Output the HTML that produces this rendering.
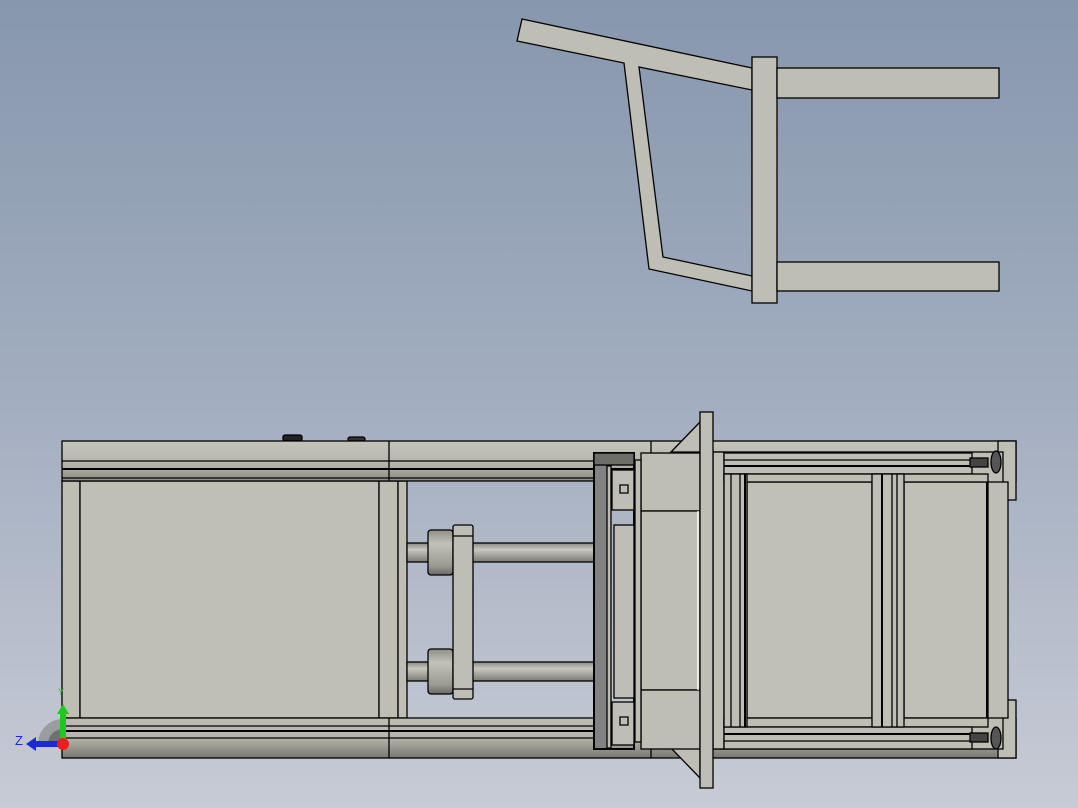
<!DOCTYPE html>
<html><head><meta charset="utf-8"><style>
html,body{margin:0;padding:0;width:1078px;height:808px;overflow:hidden}
body{background:linear-gradient(#8797ad,#a3aec0 50%,#c7cbd5)}
svg{position:absolute;left:0;top:0}
</style></head><body>
<svg width="1078" height="808" viewBox="0 0 1078 808" xmlns="http://www.w3.org/2000/svg">
<defs>
<linearGradient id="rail" x1="0" y1="0" x2="0" y2="1">
<stop offset="0" stop-color="#c4c4ba"/><stop offset="0.6" stop-color="#b4b4aa"/><stop offset="1" stop-color="#8a8a82"/></linearGradient>
<linearGradient id="railb" x1="0" y1="0" x2="0" y2="1">
<stop offset="0" stop-color="#bdbdb3"/><stop offset="0.5" stop-color="#b5b5ab"/><stop offset="1" stop-color="#77776f"/></linearGradient>
<linearGradient id="rod" x1="0" y1="0" x2="0" y2="1">
<stop offset="0" stop-color="#8a8a84"/><stop offset="0.35" stop-color="#c8c8c0"/><stop offset="1" stop-color="#7a7a74"/></linearGradient>
<linearGradient id="boss" x1="0" y1="0" x2="0" y2="1">
<stop offset="0" stop-color="#8e8e86"/><stop offset="0.3" stop-color="#c2c2b8"/><stop offset="0.8" stop-color="#9a9a92"/><stop offset="1" stop-color="#6a6a64"/></linearGradient>
</defs>
<g stroke="#000" stroke-width="1.3" fill="#bebeb4">
<!-- chair -->
<path fill-rule="evenodd" d="M522,19 L752,68 L752,291 L649,269 L624,63 L517,41 Z M639,67 L752,90 L752,276 L663,257 Z"/>
<rect x="752" y="57" width="25" height="246"/>
<rect x="777" y="68" width="222" height="30"/>
<rect x="777" y="262" width="222" height="29"/>

<!-- left panel -->
<rect x="62" y="481" width="18" height="237"/>
<rect x="80" y="481" width="299" height="237" fill="#bfbfb6"/>
<rect x="379" y="481" width="19" height="237"/>
<rect x="398" y="481" width="9" height="237"/>
<!-- rods -->
<rect x="407" y="543" width="188" height="19" fill="url(#rod)"/>
<rect x="407" y="662" width="188" height="19" fill="url(#rod)"/>
<rect x="428" y="530" width="25" height="45" rx="3" fill="url(#boss)"/>
<rect x="428" y="649" width="25" height="45" rx="3" fill="url(#boss)"/>
<rect x="453" y="525" width="20" height="174" rx="2"/>
<line x1="453" y1="536" x2="473" y2="536"/><line x1="453" y1="689" x2="473" y2="689"/>

<!-- top rail -->
<rect x="283" y="435" width="19" height="6" fill="#222" rx="2"/>
<rect x="348" y="437" width="17" height="4" fill="#333" rx="2"/>
<rect x="62" y="441" width="954" height="40" fill="url(#rail)"/>
<line x1="62" y1="461" x2="1000" y2="461"/>
<line x1="62" y1="469" x2="1000" y2="469" stroke-width="2"/>
<line x1="62" y1="478" x2="1000" y2="478"/>
<line x1="389" y1="441" x2="389" y2="481"/>
<line x1="651" y1="441" x2="651" y2="453"/>
<!-- bottom rail -->
<rect x="62" y="718" width="954" height="40" fill="url(#railb)"/>
<line x1="62" y1="726" x2="1000" y2="726"/>
<line x1="62" y1="731" x2="1000" y2="731" stroke-width="2"/>
<line x1="62" y1="738" x2="1000" y2="738"/>
<line x1="389" y1="718" x2="389" y2="758"/>
<line x1="651" y1="749" x2="651" y2="758"/>

<!-- right end caps -->
<rect x="998" y="441" width="18" height="59"/>
<rect x="998" y="700" width="18" height="58"/>

<!-- right frame -->
<rect x="713" y="452" width="290" height="297"/>
<rect x="747" y="482" width="125" height="236" fill="#c0c0b7"/>
<rect x="904" y="482" width="84" height="236" fill="#c0c0b7"/>
<rect x="713" y="452" width="11" height="297"/>
<rect x="724" y="453" width="248" height="21"/>
<line x1="724" y1="460" x2="972" y2="460"/><line x1="724" y1="466" x2="972" y2="466" stroke-width="2"/>
<rect x="724" y="474" width="264" height="8"/>
<rect x="724" y="718" width="264" height="9"/>
<rect x="724" y="727" width="248" height="22"/>
<line x1="724" y1="734" x2="972" y2="734" stroke-width="2"/><line x1="724" y1="741" x2="972" y2="741"/>
<rect x="724" y="474" width="23" height="253"/>
<line x1="731" y1="474" x2="731" y2="727"/><line x1="740" y1="474" x2="740" y2="727"/><line x1="745" y1="474" x2="745" y2="727" stroke-width="2"/>
<rect x="872" y="474" width="32" height="253"/>
<line x1="882" y1="474" x2="882" y2="727" stroke-width="2"/><line x1="892" y1="474" x2="892" y2="727"/><line x1="897" y1="474" x2="897" y2="727"/>
<rect x="988" y="482" width="20" height="236"/>
<line x1="987" y1="482" x2="987" y2="718" stroke-width="2"/>
<!-- screws/feet -->
<rect x="970" y="458" width="18" height="9" fill="#444"/>
<rect x="970" y="733" width="18" height="9" fill="#444"/>
<ellipse cx="996" cy="462" rx="5" ry="11" fill="#555"/>
<ellipse cx="996" cy="738" rx="5" ry="11" fill="#555"/>

<!-- flange triangles -->
<path d="M700,422 L671,452 L700,452 Z"/>
<path d="M700,778 L671,748 L700,748 Z"/>
<!-- carriage blocks -->
<rect x="641" y="453" width="59" height="58"/>
<rect x="641" y="511" width="59" height="179"/>
<rect x="641" y="690" width="59" height="59"/>
<line x1="698" y1="511" x2="698" y2="690" stroke="#fff"/>
<rect x="635" y="460" width="6" height="282"/>
<rect x="700" y="412" width="13" height="376"/>
<!-- guide frame -->
<rect x="594" y="453" width="40" height="296" fill="none" stroke-width="2"/>
<rect x="595" y="454" width="12" height="294" fill="#828282" stroke="none"/>
<rect x="607" y="466" width="4" height="282" fill="#bcbcb2"/>
<rect x="594" y="453" width="40" height="12" fill="#6e6e68"/>
<rect x="614" y="525" width="20" height="173"/>
<rect x="612" y="470" width="22" height="40"/>
<rect x="612" y="702" width="22" height="43"/>
<path d="M620,485 h8 v8 h-8 z M620,717 h8 v8 h-8 z" fill="none"/>
</g>

<!-- axis triad -->
<path d="M38,744 A25,25 0 0 1 63,719 L63,744 Z" fill="#9a9ca0"/>
<path d="M48,744 A15,15 0 0 1 63,729 L63,744 Z" fill="#6f7073"/>
<rect x="60" y="712" width="6" height="32" fill="#1ec81e"/>
<path d="M57,714 L63,704 L69,714 Z" fill="#1ec81e"/>
<rect x="34" y="741" width="29" height="6" fill="#1a2ad8"/>
<path d="M36,737 L26,744 L36,751 Z" fill="#1a2ad8"/>
<circle cx="63" cy="744" r="6" fill="#ee1c1c"/>
<text x="58" y="695" font-family="Liberation Sans, sans-serif" font-size="9" fill="#1ec81e">Y</text>
<text x="15" y="745" font-family="Liberation Sans, sans-serif" font-size="13" fill="#1a2ad8">Z</text>
</svg>
</body></html>
